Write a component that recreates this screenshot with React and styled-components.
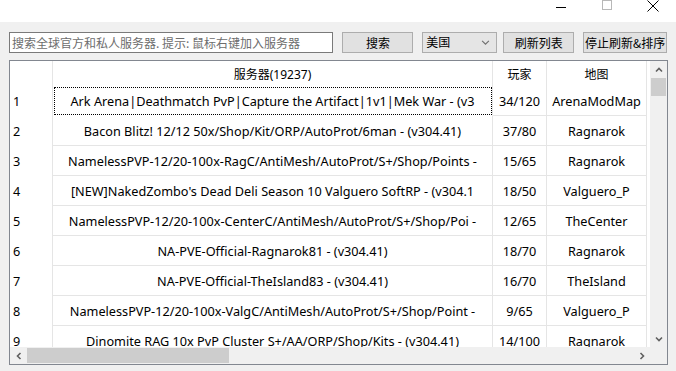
import React from 'react';
import styled, { createGlobalStyle } from 'styled-components';

const GlobalStyle = createGlobalStyle`
  html, body { margin: 0; padding: 0; background: #f0f0f0; }
  body { font-family: "Noto Sans", "Noto Sans CJK SC", sans-serif; }
`;

const servers = [
  ['Ark Arena|Deathmatch PvP|Capture the Artifact|1v1|Mek War - (v3', '34/120', 'ArenaModMap'],
  ['Bacon Blitz! 12/12 50x/Shop/Kit/ORP/AutoProt/6man - (v304.41)', '37/80', 'Ragnarok'],
  ['NamelessPVP-12/20-100x-RagC/AntiMesh/AutoProt/S+/Shop/Points -', '15/65', 'Ragnarok'],
  ["[NEW]NakedZombo's Dead Deli Season 10 Valguero SoftRP - (v304.1", '18/50', 'Valguero_P'],
  ['NamelessPVP-12/20-100x-CenterC/AntiMesh/AutoProt/S+/Shop/Poi -', '12/65', 'TheCenter'],
  ['NA-PVE-Official-Ragnarok81 - (v304.41)', '18/70', 'Ragnarok'],
  ['NA-PVE-Official-TheIsland83 - (v304.41)', '16/70', 'TheIsland'],
  ['NamelessPVP-12/20-100x-ValgC/AntiMesh/AutoProt/S+/Shop/Point -', '9/65', 'Valguero_P'],
  ['Dinomite RAG 10x PvP Cluster S+/AA/ORP/Shop/Kits - (v304.41)', '14/100', 'Ragnarok'],
];

const Chevron = ({ dir = 'down', size = 8, color = '#606060', width = 1.6 }) => {
  const pts = {
    up: '1,5.5 4,2.5 7,5.5',
    down: '1,2.5 4,5.5 7,2.5',
    left: '5.5,1 2.5,4 5.5,7',
    right: '2.5,1 5.5,4 2.5,7',
  }[dir];
  return (
    <svg width={size} height={size} viewBox="0 0 8 8">
      <polyline points={pts} fill="none" stroke={color} strokeWidth={width} />
    </svg>
  );
};

export default function App() {
  return (
    <S.Window>
      <GlobalStyle />
      <S.TitleBar>
        <S.CaptionButton $top={7}>
          <svg width="10" height="2" viewBox="0 0 10 2">
            <line x1="0" y1="0.5" x2="10" y2="0.5" stroke="#000" strokeWidth="1" />
          </svg>
        </S.CaptionButton>
        <S.CaptionButton>
          <svg width="10" height="10" viewBox="0 0 10 10">
            <rect x="0.5" y="0.5" width="9" height="9" fill="none" stroke="#b8b8b8" strokeWidth="1" />
          </svg>
        </S.CaptionButton>
        <S.CaptionButton>
          <svg width="12" height="12" viewBox="0 0 12 12">
            <path d="M0.5 0.5 L11.5 11.5 M11.5 0.5 L0.5 11.5" stroke="#000" strokeWidth="1" />
          </svg>
        </S.CaptionButton>
      </S.TitleBar>

      <S.Toolbar>
        <S.SearchInput placeholder="搜索全球官方和私人服务器. 提示: 鼠标右键加入服务器" />
        <S.Button $w={71}>搜索</S.Button>
        <S.Select>
          <span>美国</span>
          <Chevron dir="down" size={9} color="#707070" width={1} />
        </S.Select>
        <S.Button $w={71}>刷新列表</S.Button>
        <S.Button $w={84}>停止刷新&amp;排序</S.Button>
      </S.Toolbar>

      <S.Panel>
        <S.Viewport>
          <S.Grid>
            <S.Row $header>
              <S.NumCell />
              <S.Cell $header>服务器(19237)</S.Cell>
              <S.Cell $header>玩家</S.Cell>
              <S.Cell $header>地图</S.Cell>
              <S.Filler />
            </S.Row>
            {servers.map(([name, players, map], i) => (
              <S.Row key={name}>
                <S.NumCell>{i + 1}</S.NumCell>
                <S.Cell $line $focus={i === 0}>
                  {name}
                </S.Cell>
                <S.Cell $line>{players}</S.Cell>
                <S.Cell $line>{map}</S.Cell>
                <S.Filler />
              </S.Row>
            ))}
          </S.Grid>
          <S.VScroll>
            <S.Arrow>
              <Chevron dir="up" />
            </S.Arrow>
            <S.VTrack>
              <S.VThumb />
            </S.VTrack>
            <S.Arrow>
              <Chevron dir="down" />
            </S.Arrow>
          </S.VScroll>
        </S.Viewport>
        <S.BottomBar>
          <S.HScroll>
            <S.Arrow>
              <Chevron dir="left" />
            </S.Arrow>
            <S.HTrack>
              <S.HThumb />
            </S.HTrack>
            <S.Arrow>
              <Chevron dir="right" />
            </S.Arrow>
          </S.HScroll>
          <S.Corner />
        </S.BottomBar>
      </S.Panel>
    </S.Window>
  );
}

const S = {
  Window: styled.div`
    width: 676px;
    height: 371px;
    background: #f0f0f0;
    overflow: hidden;
    display: flex;
    flex-direction: column;
  `,
  TitleBar: styled.div`
    height: 22px;
    background: #fff;
    display: flex;
    justify-content: flex-end;
    align-items: flex-start;
  `,
  CaptionButton: styled.div`
    width: 46px;
    height: 22px;
    box-sizing: border-box;
    padding-top: ${p => p.$top || 0}px;
    display: flex;
    justify-content: center;
    align-items: flex-start;
  `,
  Toolbar: styled.div`
    height: 38px;
    box-sizing: border-box;
    padding: 10px 0 0 9px;
    display: flex;
    align-items: flex-start;
  `,
  SearchInput: styled.input`
    width: 325px;
    height: 21px;
    box-sizing: border-box;
    border: 1px solid #7a7a7a;
    background: #fff;
    padding: 0 2px;
    margin: 0 9px 0 0;
    font-family: "Noto Sans CJK SC", sans-serif;
    font-size: 12px;
    outline: none;
    &::placeholder { color: #6d6d6d; }
  `,
  Button: styled.div`
    width: ${p => p.$w}px;
    height: 21px;
    box-sizing: border-box;
    border: 1px solid #adadad;
    background: #e1e1e1;
    font-family: "Noto Sans CJK SC", sans-serif;
    font-size: 12px;
    color: #000;
    display: flex;
    align-items: center;
    justify-content: center;
    margin-right: 9px;
  `,
  Select: styled.div`
    width: 75px;
    height: 21px;
    box-sizing: border-box;
    border: 1px solid #adadad;
    background: #e5e5e5;
    font-family: "Noto Sans CJK SC", sans-serif;
    font-size: 12px;
    display: flex;
    align-items: center;
    justify-content: space-between;
    padding: 0 6px 0 3px;
    margin-right: 6px;
    span { margin-top: -2px; }
  `,
  Panel: styled.div`
    margin-left: 9px;
    width: 659px;
    height: 305px;
    box-sizing: border-box;
    border: 1px solid #828790;
    background: #fff;
    display: flex;
    flex-direction: column;
  `,
  Viewport: styled.div`
    flex: 1;
    display: flex;
    overflow: hidden;
  `,
  Grid: styled.div`
    width: 640px;
    overflow: hidden;
    font-size: 12.7px;
    color: #000;
  `,
  Row: styled.div`
    display: grid;
    grid-template-columns: 43px 440px 54px 100px 3px;
    height: ${p => (p.$header ? 25 : 30)}px;
  `,
  NumCell: styled.div`
    border-right: 1px solid #e5e5e5;
    padding-left: 3px;
    display: flex;
    align-items: center;
  `,
  Cell: styled.div`
    box-sizing: border-box;
    border-right: 1px solid #e5e5e5;
    border-bottom: ${p => (p.$line ? '1px solid #e5e5e5' : 'none')};
    display: flex;
    align-items: center;
    justify-content: center;
    white-space: nowrap;
    overflow: hidden;
    font-family: "Noto Sans", "Noto Sans CJK SC", sans-serif;
    font-size: ${p => (p.$header ? '12px' : 'inherit')};
    ${p => p.$focus && 'outline: 1px dotted #000; outline-offset: -2px; border-bottom-color: transparent;'}
  `,
  Filler: styled.div``,
  VScroll: styled.div`
    width: 17px;
    background: #f0f0f0;
    display: flex;
    flex-direction: column;
  `,
  Arrow: styled.div`
    width: 17px;
    height: 17px;
    flex: none;
    display: flex;
    align-items: center;
    justify-content: center;
  `,
  VTrack: styled.div`
    flex: 1;
    padding: 0 1px;
  `,
  VThumb: styled.div`
    height: 18px;
    background: #cdcdcd;
  `,
  BottomBar: styled.div`
    height: 17px;
    display: flex;
  `,
  HScroll: styled.div`
    width: 640px;
    background: #f0f0f0;
    display: flex;
  `,
  HTrack: styled.div`
    flex: 1;
    padding: 1px 0;
  `,
  HThumb: styled.div`
    width: 202px;
    height: 100%;
    background: #cdcdcd;
  `,
  Corner: styled.div`
    flex: 1;
    background: #f0f0f0;
  `,
};
